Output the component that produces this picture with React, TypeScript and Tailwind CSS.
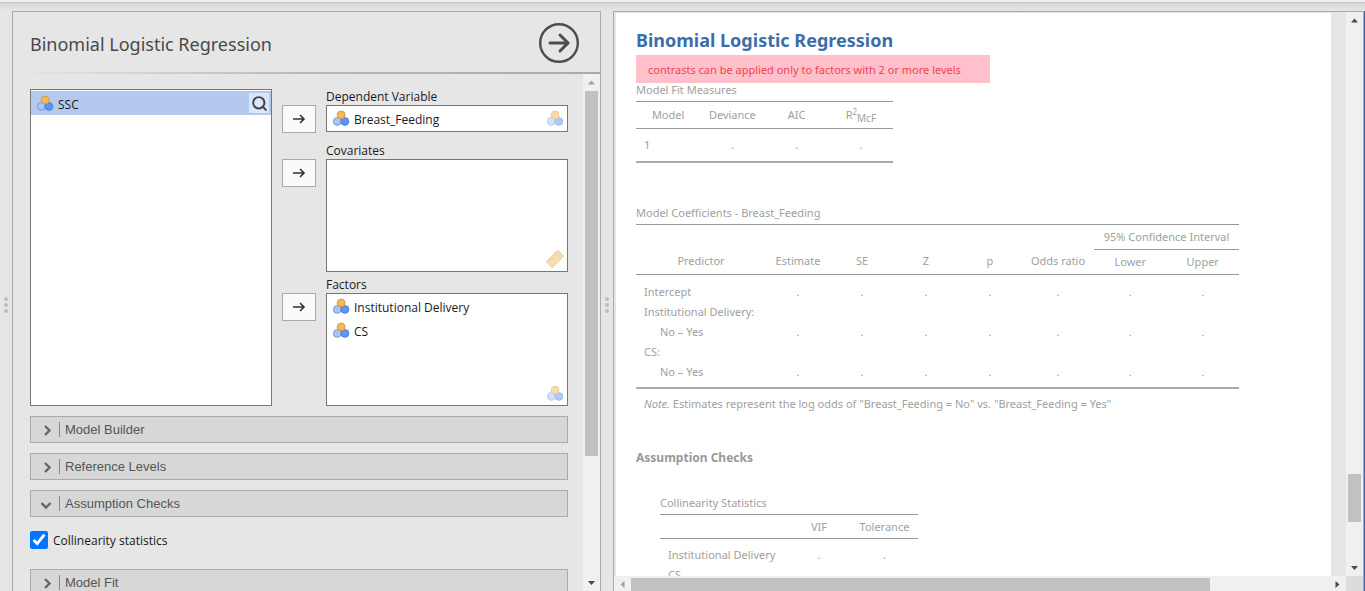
import React, { useState } from 'react';
import { Search } from 'lucide-react';

const NominalIcon: React.FC<{ muted?: boolean }> = ({ muted }) => (
  <svg viewBox="0 0 17 17" className={`h-[17px] w-[17px] shrink-0 ${muted ? 'opacity-50' : ''}`} aria-hidden="true">
    <circle cx="4.3" cy="11.4" r="3.9" fill="#a9c5f2" stroke="#6f9be3" />
    <circle cx="11.9" cy="11.4" r="3.9" fill="#5f95ee" stroke="#4a80dd" />
    <circle cx="8.1" cy="5" r="3.9" fill="#f3ba55" stroke="#cf9c48" />
  </svg>
);

const RulerIcon: React.FC = () => (
  <svg viewBox="0 0 18 18" className="h-[18px] w-[18px] opacity-60" aria-hidden="true">
    <g transform="rotate(-45 9 9)">
      <rect x="1" y="5" width="16" height="8" fill="#f8c681" stroke="#eab062" />
      <path d="M4.2 5v3M7.4 5v4M10.6 5v3M13.8 5v4" stroke="#dfa04e" strokeWidth="0.8" />
    </g>
  </svg>
);

const ArrowIcon: React.FC = () => (
  <svg viewBox="0 0 14 12" className="h-3 w-3.5" fill="none" stroke="#333" strokeWidth="1.6" aria-hidden="true">
    <path d="M1 6h11M8 2l4 4-4 4" />
  </svg>
);

const Triangle: React.FC<{ dir: 'up' | 'down' | 'left' | 'right'; dim?: boolean }> = ({ dir, dim }) => {
  const points = {
    up: '5,10.5 8.5,6.5 12,10.5',
    down: '5,7 12,7 8.5,11',
    left: '10.5,5 10.5,12 6.5,8.5',
    right: '6.5,5 6.5,12 10.5,8.5',
  };
  return (
    <svg viewBox="0 0 17 17" className="h-[17px] w-[17px] shrink-0" aria-hidden="true">
      <polygon points={points[dir]} fill={dim ? '#a0a0a0' : '#484848'} />
    </svg>
  );
};

const Splitter: React.FC = () => (
  <div className="flex cursor-col-resize flex-col items-center justify-center gap-0.5 pt-2">
    <span className="h-1 w-1 rounded-full bg-[#bdbdbd]" />
    <span className="h-1 w-1 rounded-full bg-[#bdbdbd]" />
    <span className="h-1 w-1 rounded-full bg-[#bdbdbd]" />
  </div>
);

const AssignButton: React.FC<{ label: string }> = ({ label }) => (
  <button
    aria-label={label}
    className="mt-[18px] flex h-7 w-[34px] shrink-0 items-center justify-center border border-[#aaa] bg-[#fafafa]"
  >
    <ArrowIcon />
  </button>
);

const Variable: React.FC<{ name: string }> = ({ name }) => (
  <li className="flex h-6 items-center gap-1 pl-1.5">
    <NominalIcon />
    <span className="pt-[3px]">{name}</span>
  </li>
);

interface TargetProps {
  label: string;
  variables: string[];
  hint: React.ReactNode;
  single?: boolean;
}

const Target: React.FC<TargetProps> = ({ label, variables, hint, single }) => (
  <div className="flex gap-2.5">
    <AssignButton label={`Move to ${label}`} />
    <div className="min-w-0 flex-1">
      <div className="h-[18px] leading-5">{label}</div>
      <div
        className={`flex justify-between border border-[#777] bg-white pr-[3px] ${single ? 'h-[27px] items-center' : 'h-[113px] items-end pb-[3px]'}`}
      >
        <ul className={single ? '' : 'self-start'}>
          {variables.map((name) => (
            <Variable key={name} name={name} />
          ))}
        </ul>
        {hint}
      </div>
    </div>
  </div>
);

interface CollapseProps {
  title: string;
  initial?: boolean;
  children?: React.ReactNode;
}

const Collapse: React.FC<CollapseProps> = ({ title, initial = false, children }) => {
  const [open, setOpen] = useState(initial);
  return (
    <section>
      <button
        aria-expanded={open}
        onClick={() => setOpen(!open)}
        className="flex h-[27px] w-full items-center border border-[#aaa] bg-[#d7d7d7] pl-2.5 font-['Liberation_Sans',sans-serif] text-[13px] text-[#555]"
      >
        <svg viewBox="0 0 12 12" className="h-3 w-3" fill="none" stroke="#666" strokeWidth="2.4" aria-hidden="true">
          {open ? <path d="M.5 5 5 9.500 9.500 5" /> : <path d="M4 2 8.500 6.500 4 11" />}
        </svg>
        <span className="ml-1.5 h-[15px] border-l border-[#888] pl-[5px] leading-4">{title}</span>
      </button>
      {open && children}
    </section>
  );
};

// An empty result cell, shown as a single dot
const Dots: React.FC<{ count: number }> = ({ count }) => (
  <>
    {Array.from({ length: count }, (_, i) => (
      <td key={i} className="text-center">.</td>
    ))}
  </>
);

const OptionsPanel: React.FC = () => (
  <section className="flex min-h-0 min-w-0 flex-col border-x border-t border-[#aaa]">
    <header className="flex h-[60px] shrink-0 items-center justify-between pt-0.5 pr-5 pl-[17px]">
      <h1 className="pt-0.5 font-['Noto_Sans',sans-serif] text-lg font-normal text-[#4a4a4a]">Binomial Logistic Regression</h1>
      <button aria-label="Hide options">
        <svg viewBox="0 0 42 42" className="h-[42px] w-[42px]" fill="none" stroke="#4d4d4d" aria-hidden="true">
          <circle cx="21" cy="21" r="18.8" strokeWidth="2.4" />
          <path d="M12 21h18M22 13l8 8-8 8" strokeWidth="3" strokeLinecap="round" />
        </svg>
      </button>
    </header>
    <div className="h-0.5 shrink-0 bg-linear-to-r from-transparent via-[#b8b8b8] to-[#aaa]" />
    <div className="flex min-h-0 flex-1">
      <div className="min-w-0 flex-1 overflow-hidden pt-[13px] pr-[15px] pl-[17px]">
        <div className="grid grid-cols-[minmax(0,242fr)_minmax(0,286fr)] gap-2.5 pb-2.5">
          <ul className="mt-0.5 border border-[#777] bg-white pt-px">
            <li className="flex h-6 items-center justify-between bg-[#b5c9ef] pr-0.5">
              <span className="flex items-center gap-1 pl-1.5">
                <NominalIcon />
                <span className="pt-[3px]">SSC</span>
              </span>
              <button aria-label="Search" className="flex h-5 w-5 items-center justify-center bg-[#dbe6fa]">
                <Search size={17} strokeWidth={2.8} color="#444" />
              </button>
            </li>
          </ul>
          <div>
            <div className="pb-2">
              <Target single label="Dependent Variable" variables={['Breast_Feeding']} hint={<NominalIcon muted />} />
            </div>
            <div className="pb-[3px]">
              <Target label="Covariates" variables={[]} hint={<RulerIcon />} />
            </div>
            <Target label="Factors" variables={['Institutional Delivery', 'CS']} hint={<NominalIcon muted />} />
          </div>
        </div>
        <div className="flex flex-col gap-2.5">
          <Collapse title="Model Builder" />
          <Collapse title="Reference Levels" />
          <Collapse title="Assumption Checks" initial>
            <label className="flex items-center gap-[5px] pt-3.5 pb-2.5">
              <input type="checkbox" defaultChecked className="h-[18px] w-[18px] accent-[#0075ff]" />
              <span className="pt-0.5">Collinearity statistics</span>
            </label>
          </Collapse>
          <Collapse title="Model Fit" />
        </div>
      </div>
      <div className="flex w-[17px] shrink-0 flex-col bg-[#f0f0f0]">
        <Triangle dir="up" dim />
        <div className="flex min-h-0 flex-1 flex-col px-0.5">
          <div className="flex-[365_1_0%] bg-[#c1c1c1]" />
          <div className="flex-[118_1_0%]" />
        </div>
        <Triangle dir="down" />
      </div>
    </div>
  </section>
);

const FitTable: React.FC = () => (
  <table className="w-[257px] table-fixed border-collapse">
    <caption className="h-[18px] text-left leading-[14px]">Model Fit Measures</caption>
    <thead>
      <tr className="h-[27px] border-y border-[#999]">
        <th className="font-normal">Model</th>
        <th className="font-normal">Deviance</th>
        <th className="font-normal">AIC</th>
        <th className="font-normal">
          R<sup className="text-[8px]">2</sup>
          <sub className="text-[10px]">McF</sub>
        </th>
      </tr>
    </thead>
    <tbody>
      <tr className="h-[33px] border-b-2 border-[#aaa]">
        <td className="pl-2">1</td>
        <Dots count={3} />
      </tr>
    </tbody>
  </table>
);

const coefficients = [
  { name: 'Intercept', values: true },
  { name: 'Institutional Delivery:' },
  { name: 'No – Yes', values: true, nested: true },
  { name: 'CS:' },
  { name: 'No – Yes', values: true, nested: true },
];

const CoefficientsTable: React.FC = () => (
  <table className="w-[603px] table-fixed border-collapse">
    <caption className="h-[18px] text-left leading-[14px]">Model Coefficients - Breast_Feeding</caption>
    <colgroup>
      <col className="w-[130px]" />
      <col span={4} className="w-16" />
      <col className="w-[72px]" />
      <col span={2} />
    </colgroup>
    <thead>
      <tr className="h-[25px] border-t border-[#999]">
        <td colSpan={6} />
        <th colSpan={2} className="border-b border-[#999] font-normal">95% Confidence Interval</th>
      </tr>
      <tr className="h-[25px] border-b border-[#999]">
        {['Predictor', 'Estimate', 'SE', 'Z', 'p', 'Odds ratio', 'Lower', 'Upper'].map((head) => (
          <th key={head} className="font-normal">{head}</th>
        ))}
      </tr>
    </thead>
    <tbody>
      <tr className="h-2"><td colSpan={8} /></tr>
      {coefficients.map((row, i) => (
        <tr key={i} className="h-5">
          <td className={row.nested ? 'pl-6' : 'pl-2'}>{row.name}</td>
          {row.values ? <Dots count={7} /> : <td colSpan={7} />}
        </tr>
      ))}
      <tr className="h-1.5 border-b-2 border-[#aaa]"><td colSpan={8} /></tr>
    </tbody>
    <tfoot>
      <tr className="h-[30px]">
        <td colSpan={8} className="pl-2">
          <i>Note.</i> Estimates represent the log odds of "Breast_Feeding = No" vs. "Breast_Feeding = Yes"
        </td>
      </tr>
    </tfoot>
  </table>
);

const CollinearityTable: React.FC = () => (
  <table className="w-[258px] table-fixed border-collapse">
    <caption className="h-[18px] text-left leading-[14px]">Collinearity Statistics</caption>
    <colgroup>
      <col className="w-[127px]" />
      <col className="w-16" />
      <col />
    </colgroup>
    <thead>
      <tr className="h-6 border-y border-[#999]">
        <td />
        <th className="font-normal">VIF</th>
        <th className="font-normal">Tolerance</th>
      </tr>
    </thead>
    <tbody>
      <tr className="h-1.5"><td colSpan={3} /></tr>
      {['Institutional Delivery', 'CS'].map((name) => (
        <tr key={name} className="h-5">
          <td className="pl-2">{name}</td>
          <Dots count={2} />
        </tr>
      ))}
    </tbody>
  </table>
);

const ResultsPanel: React.FC = () => (
  <section className="grid min-h-0 min-w-0 grid-cols-[minmax(0,1fr)_17px] grid-rows-[minmax(0,1fr)_15px] border-t border-r border-l border-[#aaa]">
    <div className="mt-px mr-[15px] ml-0.5 overflow-hidden bg-white pt-[15px] pl-5 font-['Noto_Sans',sans-serif] text-[11px] leading-4 text-[#a0a0a0]">
      <h2 className="h-[27px] text-lg leading-6 font-bold text-[#3e6da9]">Binomial Logistic Regression</h2>
      <p className="flex h-7 w-[354px] items-center bg-[#ffc0cb] pt-0.5 pl-3 text-[#f0444e]">
        contrasts can be applied only to factors with 2 or more levels
      </p>
      <FitTable />
      <div className="pt-[43px]">
        <CoefficientsTable />
      </div>
      <h3 className="pt-8 text-xs font-bold text-[#999]">Assumption Checks</h3>
      <div className="pt-[30px] pl-6">
        <CollinearityTable />
      </div>
    </div>
    <div className="flex flex-col bg-[#f0f0f0]">
      <Triangle dir="up" />
      <div className="flex min-h-0 flex-1 flex-col px-0.5">
        <div className="flex-[84_1_0%]" />
        <div className="flex-[9_1_0%] bg-[#c1c1c1]" />
        <div className="flex-[7_1_0%]" />
      </div>
      <Triangle dir="down" />
    </div>
    <div className="flex overflow-hidden bg-[#f0f0f0]">
      <Triangle dir="left" dim />
      <div className="min-w-0 flex-1 pt-0.5">
        <div className="h-full w-[83%] bg-[#c1c1c1]" />
      </div>
      <Triangle dir="right" />
    </div>
    <div className="bg-[#dcdcdc]" />
  </section>
);

const App: React.FC = () => (
  <div className="flex h-screen flex-col overflow-hidden bg-[#e6e6e6] font-['Open_Sans','Noto_Sans',sans-serif] text-xs text-[#1a1a1a]">
    <div className="h-[3px] shrink-0 border-b border-[#c8c8c8] bg-[#eee]" />
    <div className="h-2 shrink-0 bg-linear-to-b from-[#d8d8d8] to-[#e6e6e6]" />
    <main className="grid min-h-0 flex-1 grid-cols-[12px_minmax(0,589fr)_12px_minmax(0,751fr)] grid-rows-[minmax(0,1fr)] border-r border-[#3c6699]">
      <Splitter />
      <OptionsPanel />
      <Splitter />
      <ResultsPanel />
    </main>
  </div>
);

export default App;
